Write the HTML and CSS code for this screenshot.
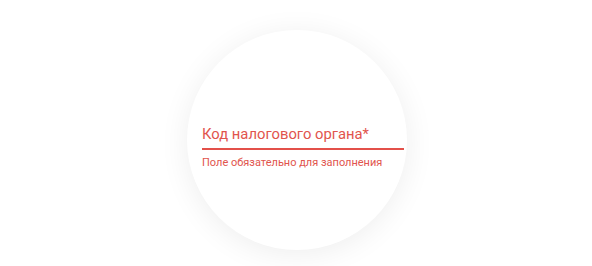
FILE: index.html
```html
<!DOCTYPE html>
<html lang="ru">
<head>
<meta charset="utf-8">
<link rel="stylesheet" href="styles.css">
</head>
<body>
<div class="stage">
  <div class="circle">
    <div class="field">
      <label class="label">Код налогового органа*</label>
      <div class="underline"></div>
      <div class="helper">Поле обязательно для заполнения</div>
    </div>
  </div>
</div>
</body>
</html>
```
FILE: styles.css
```css
html, body {
  margin: 0;
  padding: 0;
  background: #ffffff;
}
.stage {
  width: 592px;
  height: 266px;
  display: flex;
  justify-content: center;
  padding-top: 30px;
  box-sizing: border-box;
  padding-left: 2px;
}
.circle {
  width: 220px;
  height: 220px;
  border-radius: 50%;
  background: #ffffff;
  box-shadow: 0 4px 30px rgba(0, 0, 0, 0.07);
  display: flex;
  flex-direction: column;
  padding: 95px 3px 0 15px;
  box-sizing: border-box;
  overflow: hidden;
}
.field {
  display: flex;
  flex-direction: column;
  font-family: Roboto, "Noto Sans", sans-serif;
  color: #e1544d;
}
.label {
  font-size: 14.8px;
  line-height: 18px;
}
.underline {
  height: 2px;
  background: #e3504a;
  margin-top: 5px;
}
.helper {
  font-size: 11px;
  line-height: 13px;
  margin-top: 6px;
}
```
